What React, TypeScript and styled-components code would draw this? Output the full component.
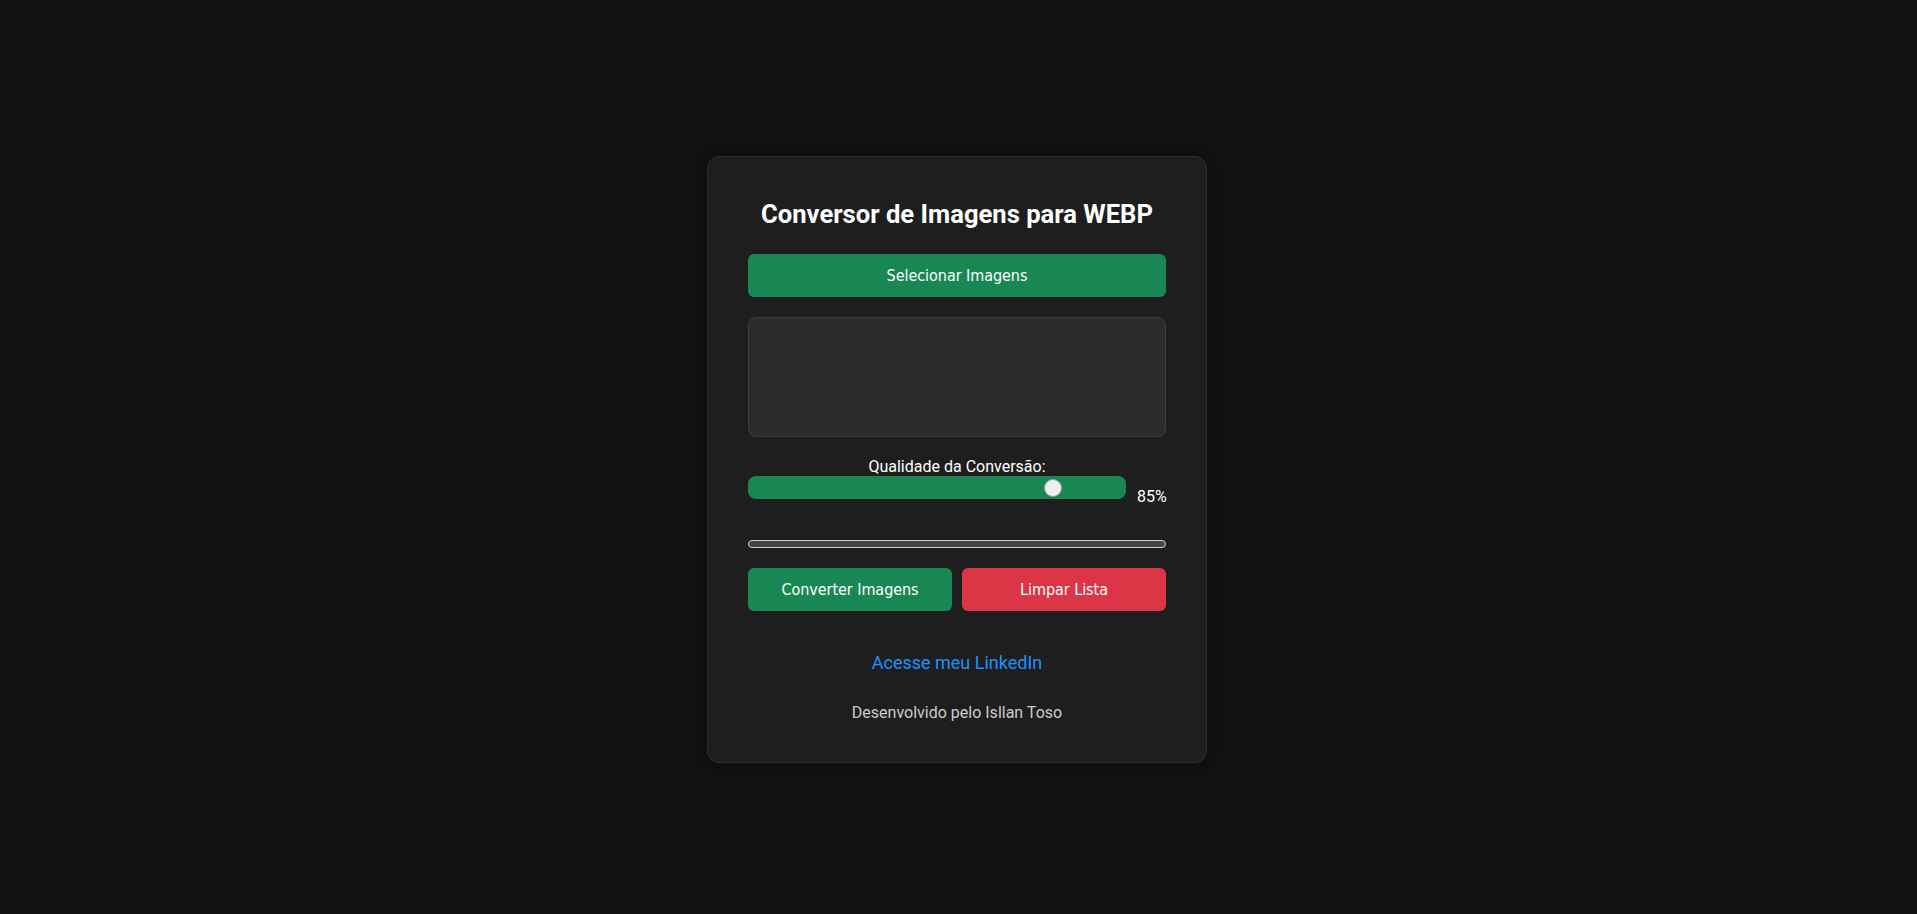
import React, { useState } from "react";
import styled, { createGlobalStyle } from "styled-components";

const GlobalStyle = createGlobalStyle`
  html, body {
    margin: 0;
    padding: 0;
    background: #121212;
  }
  body {
    font-family: Roboto, "Noto Sans", Arial, sans-serif;
    color: #ffffff;
  }
  * { box-sizing: border-box; }
`;

const Page = styled.main`
  min-height: 100vh;
  display: flex;
  align-items: center;
  justify-content: center;
  padding: 5px 3px 0 0;
`;

const Card = styled.section`
  width: 500px;
  background: #1e1e1e;
  border: 1px solid #2e2e2e;
  border-radius: 12px;
  padding: 40px;
  box-shadow: 0 0 20px rgba(0, 0, 0, 0.45);
  display: flex;
  flex-direction: column;
  text-align: center;
`;

const Title = styled.h2`
  margin: 0 0 23px;
  font-size: 25.6px;
  font-weight: 700;
  line-height: 34px;
  color: #ffffff;
`;

const ActionButton = styled.button<{ $tone: "green" | "red" }>`
  flex: none;
  height: 43px;
  border: none;
  border-radius: 6px;
  background: ${(p) => (p.$tone === "red" ? "#dc3545" : "#198754")};
  color: #ffffff;
  font-family: "DejaVu Sans Condensed", "DejaVu Sans", sans-serif;
  font-size: 16px;
  letter-spacing: -0.05px;
  cursor: pointer;
  padding: 0 12px;
`;

const FileList = styled.div`
  margin-top: 20px;
  height: 120px;
  background: #2c2c2c;
  border: 1px solid #3d3d3d;
  border-radius: 8px;
`;

const Label = styled.label`
  margin-top: 20px;
  font-size: 16px;
  line-height: 19px;
  color: #ffffff;
`;

const SliderRow = styled.div`
  display: flex;
  align-items: flex-start;
  gap: 11px;
`;

const Range = styled.input`
  -webkit-appearance: none;
  appearance: none;
  flex: 1;
  margin: 0;
  height: 23px;
  border-radius: 8px;
  background: #198754;
  outline: none;

  &::-webkit-slider-thumb {
    -webkit-appearance: none;
    appearance: none;
    width: 18px;
    height: 18px;
    border-radius: 50%;
    background: #eeeeee;
    border: 1px solid #9a9a9a;
    cursor: pointer;
  }
`;

const Percent = styled.span`
  margin-top: 11px;
  font-size: 16px;
  line-height: 19px;
  color: #ffffff;
  width: 29px;
  text-align: right;
`;

const Progress = styled.div`
  margin-top: 34px;
  height: 8px;
  border: 1px solid #d0d0d0;
  border-radius: 4px;
  background: #444444;
`;

const ButtonRow = styled.div`
  margin-top: 20px;
  display: flex;
  gap: 10px;

  & > * {
    flex: 1;
  }
`;

const Link = styled.a`
  margin-top: 41px;
  font-size: 18px;
  line-height: 21px;
  color: #1e90ff;
  text-decoration: none;
  align-self: center;
`;

const Footer = styled.p`
  margin: 30px 0 0;
  font-size: 16px;
  line-height: 19px;
  color: #cccccc;
`;

export default function App() {
  const [quality, setQuality] = useState(85);
  return (
    <>
      <GlobalStyle />
      <Page>
        <Card>
          <Title>Conversor de Imagens para WEBP</Title>
          <ActionButton $tone="green">Selecionar Imagens</ActionButton>
          <FileList />
          <Label htmlFor="quality">Qualidade da Conversão:</Label>
          <SliderRow>
            <Range
              id="quality"
              type="range"
              min={15}
              max={100}
              value={quality}
              onChange={(e) => setQuality(Number(e.target.value))}
            />
            <Percent>{quality}%</Percent>
          </SliderRow>
          <Progress />
          <ButtonRow>
            <ActionButton $tone="green">Converter Imagens</ActionButton>
            <ActionButton $tone="red">Limpar Lista</ActionButton>
          </ButtonRow>
          <Link href="#">Acesse meu LinkedIn</Link>
          <Footer>Desenvolvido pelo Isllan Toso</Footer>
        </Card>
      </Page>
    </>
  );
}
